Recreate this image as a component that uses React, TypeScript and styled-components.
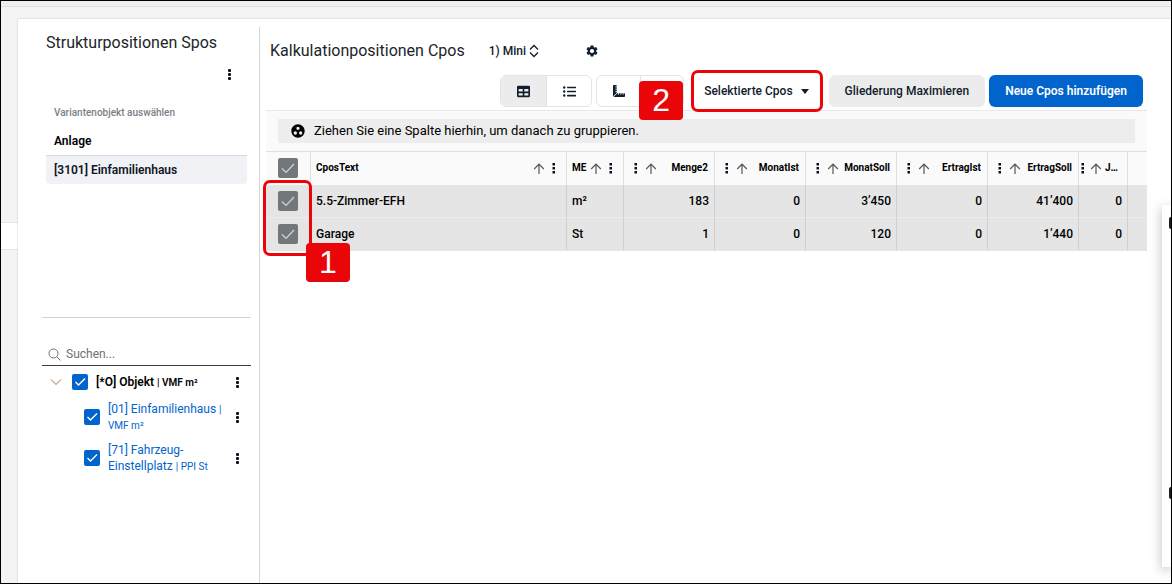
import React from "react";
import styled, { createGlobalStyle, css } from "styled-components";
import { FaTable, FaListUl, FaRulerCombined } from "react-icons/fa";
import { MdGroupWork, MdSettings } from "react-icons/md";

const GlobalStyle = createGlobalStyle`
  *, *::before, *::after { box-sizing: border-box; }
  body {
    margin: 0;
    font-family: Roboto, "Liberation Sans", sans-serif;
    font-size: 12px;
    line-height: 16px;
    color: #000;
    background: #f4f4f4;
  }
  button, input, select { font: inherit; color: inherit; }
  svg { display: block; flex: none; }
`;

const Window = styled.div`
  position: relative;
  display: flex;
  flex-direction: column;
  min-height: 100vh;
  overflow: hidden;
  border: 1px solid #000;
`;

const TopStrip = styled.div`
  height: 6px;
  background: #f0eff0;
  border-bottom: 1px solid #e2e1e2;
`;

const Body = styled.div`
  flex: 1;
  display: flex;
  padding-top: 12px;
`;

const Rail = styled.div`
  flex: none;
  width: 17px;
  padding-top: 203px;
`;

const RailTab = styled.div`
  height: 28px;
  background: #fff;
  border: solid #e6e6e6;
  border-width: 1px 0;
`;

const Card = styled.div`
  flex: 1;
  min-width: 0;
  display: flex;
  padding-top: 8px;
  background: #fff;
  box-shadow: 0 0 2px rgba(0, 0, 0, 0.2);
`;

const Sidebar = styled.aside`
  flex: none;
  width: 242px;
  padding: 4px 8px 0 24px;
  border-right: 1px solid #d6d6d6;
`;

const Title = styled.h2`
  margin: 0;
  font-size: 16px;
  line-height: 24px;
  font-weight: 400;
  color: #212529;
  white-space: nowrap;
`;

const SidebarHead = styled.div`
  padding: 0 4px;
`;

const MenuLine = styled.div`
  display: flex;
  justify-content: flex-end;
  padding: 12px 14px 0 0;
`;

const IconButton = styled.button`
  display: inline-flex;
  align-items: center;
  justify-content: center;
  padding: 0;
  border: 0;
  background: none;
  cursor: pointer;
`;

const Variants = styled.section`
  height: 237px;
  padding: 24px 4px 0;
  border-bottom: 1px solid #d4d4d4;
`;

const VariantLabel = styled.div`
  padding: 0 8px;
  font-size: 10px;
  font-weight: 500;
  color: #7b7f84;
`;

const VariantItem = styled.div<{ $selected?: boolean }>`
  padding: 6px 8px;
  font-weight: 600;
  ${(p) =>
    p.$selected
      ? css`
          background: #f1f2f5;
          border-radius: 0 0 4px 4px;
          color: #0d1526;
        `
      : css`
          margin-top: 6px;
          border-bottom: 1px solid #d5dade;
        `}
`;

const Search = styled.label`
  display: flex;
  align-items: center;
  gap: 5px;
  margin-top: 25px;
  padding: 3px 6px;
  border-bottom: 1px solid #3d3d3d;
`;

const SearchInput = styled.input`
  flex: 1;
  min-width: 0;
  height: 16px;
  padding: 0;
  border: 0;
  outline: 0;
  background: none;
  &::placeholder {
    color: #6f6f6f;
    opacity: 1;
  }
`;

const Tree = styled.ul`
  margin: 0;
  padding: 2px 10px 0 8px;
  list-style: none;
`;

const TreeRow = styled.li<{ $child?: boolean }>`
  display: flex;
  align-items: center;
  min-height: ${(p) => (p.$child ? 41 : 28)}px;
  padding-left: ${(p) => (p.$child ? 34 : 0)}px;
`;

const Twisty = styled(IconButton)`
  width: 12px;
  margin-right: 10px;
`;

const TreeLabel = styled.label<{ $child?: boolean }>`
  flex: 1;
  display: flex;
  align-items: center;
  gap: 8px;
  font-weight: ${(p) => (p.$child ? 400 : 600)};
  color: ${(p) => (p.$child ? "#0064cc" : "#000")};
`;

const Unit = styled.small`
  font-size: 10px;
  line-height: 12px;
`;

const Check = styled.input<{ $gray?: boolean }>`
  appearance: none;
  flex: none;
  display: block;
  margin: 0;
  width: ${(p) => (p.$gray ? 20 : 16)}px;
  height: ${(p) => (p.$gray ? 20 : 16)}px;
  border-radius: 2px;
  background: ${(p) => (p.$gray ? "#73767b" : "#0064cc")};
`;

const CheckBox = styled.span`
  position: relative;
  flex: none;
  display: inline-block;
  vertical-align: top;
`;

const Tick = styled.svg`
  position: absolute;
  inset: 0;
  width: 100%;
  height: 100%;
  fill: none;
  pointer-events: none;
`;

const Main = styled.main`
  flex: 1;
  min-width: 0;
  padding: 12px 24px 0 6px;
`;

const MainHead = styled.div`
  display: flex;
  align-items: center;
  padding-left: 4px;
`;

const ViewPicker = styled.div`
  display: flex;
  align-items: center;
  margin: 0 46px 0 24px;
  color: #111c2c;
`;

const ViewSelect = styled.select`
  appearance: none;
  width: 40px;
  padding: 0;
  border: 0;
  background: none;
  font-weight: 500;
`;

const Toolbar = styled.div`
  display: flex;
  justify-content: flex-end;
  gap: 4px;
  padding: 12px 4px 3px 0;
`;

const Segments = styled.div`
  position: relative;
  display: flex;
  border: 1px solid #e4e4e4;
  border-radius: 6px;
`;

const Segment = styled.button<{ $on?: boolean; $narrow?: boolean }>`
  display: flex;
  align-items: center;
  justify-content: center;
  width: ${(p) => (p.$narrow ? 43 : 45)}px;
  padding: 0;
  border: 0;
  border-radius: ${(p) => (p.$on ? "5px 0 0 5px" : "0")};
  background: ${(p) => (p.$on ? "#ececec" : "none")};
  color: #111c2c;
  & + & {
    border-left: 1px solid #e4e4e4;
  }
`;

const Button = styled.button<{ $kind: "plain" | "gray" | "primary" }>`
  display: flex;
  align-items: center;
  gap: 8px;
  height: 32px;
  padding: 0 16px;
  border: 0;
  border-radius: 6px;
  font-weight: ${(p) => (p.$kind === "primary" ? 600 : 500)};
  white-space: nowrap;
  color: ${(p) => (p.$kind === "primary" ? "#fff" : "#111c2c")};
  background: ${(p) =>
    ({ plain: "#fff", gray: "#ececec", primary: "#0064cc" })[p.$kind]};
`;

const Anchor = styled.div`
  position: relative;
`;

const markBox = css`
  position: absolute;
  border: 3px solid #e90508;
  border-radius: 7px;
  pointer-events: none;
`;

const SelectionMark = styled.span`
  ${markBox}
  inset: -5px 2px -5px 3px;
`;

const RowsMark = styled.span`
  ${markBox}
  left: -3px;
  bottom: -5px;
  width: 49px;
  height: 76px;
`;

const Badge = styled.span<{ $at: "toolbar" | "rows" }>`
  position: absolute;
  z-index: 1;
  width: 44px;
  height: 39px;
  border-radius: 4px;
  background: #e90508;
  color: #fff;
  font-family: "Liberation Sans", Arial, sans-serif;
  font-size: 32px;
  line-height: 38px;
  text-align: center;
  ${(p) =>
    p.$at === "toolbar"
      ? css`
          right: 0;
          top: 5px;
        `
      : css`
          left: 40px;
          bottom: -31px;
        `}
`;

const GroupPanel = styled.div`
  padding: 8px 12px;
  border-top: 1px solid #e8e8e8;
  background: #fafafa;
`;

const GroupHint = styled.div`
  display: flex;
  align-items: center;
  gap: 8px;
  height: 24px;
  padding: 0 12px;
  background: #ededed;
  font-size: 13px;
`;

const Grid = styled.table`
  width: 100%;
  table-layout: fixed;
  border-collapse: separate;
  border-spacing: 0;
  border-top: 1px solid #e0e0e0;
`;

const Col = styled.col<{ $w?: number }>`
  width: ${(p) => (p.$w ? `${p.$w}px` : "auto")};
`;

const Th = styled.th`
  height: 33px;
  padding: 0 0 2px;
  background: #fafafa;
  border-right: 1px solid #e0e0e0;
  font-size: 10px;
  font-weight: 700;
  &:last-child {
    border-right: 0;
  }
`;

const HeadCell = styled.div<{ $num?: boolean; $tight?: boolean }>`
  display: flex;
  align-items: center;
  gap: ${(p) => (p.$tight ? 3 : 5)}px;
  padding: ${(p) => (p.$tight ? "0 8px 0 0" : p.$num ? "0 6px 0 8px" : "0 8px 0 5px")};
  & > span {
    flex: 1;
    min-width: 0;
    overflow: ${(p) => (p.$num ? "hidden" : "visible")};
    text-overflow: ellipsis;
    white-space: nowrap;
    text-align: ${(p) => (p.$num ? "right" : "left")};
  }
`;

const Td = styled.td<{ $num?: boolean }>`
  height: 33px;
  padding: 0 5px;
  background: #e5e5e5;
  border-right: 1px solid #d0d0d0;
  border-bottom: 1px solid #ececec;
  font-weight: 500;
  text-align: ${(p) => (p.$num ? "right" : "left")};
  tr:last-child > & {
    border-bottom-color: #e5e5e5;
  }
  &:last-child {
    border-right: 0;
  }
`;

const CheckHolder = styled.div`
  display: flex;
  justify-content: center;
`;

const Drawer = styled.div`
  position: absolute;
  top: 204px;
  right: 0;
  bottom: 16px;
  width: 9px;
  display: flex;
  flex-direction: column;
  justify-content: space-between;
  align-items: flex-end;
  padding: 12px 0 68px;
  background: #fff;
  box-shadow: 0 3px 12px rgba(0, 0, 0, 0.28);
`;

const DrawerIcon = styled.i`
  width: 2px;
  height: 12px;
  border-radius: 2px 0 0 2px;
  background: #1c1c1c;
`;

const Kebab = () => (
  <svg width="8" height="14" viewBox="0 0 8 14" fill="#0b1020">
    <rect x="3" y="2" width="3" height="3" rx="1" />
    <rect x="3" y="6" width="3" height="3" rx="1" />
    <rect x="3" y="10" width="3" height="3" rx="1" />
  </svg>
);

const ColumnDots = () => (
  <svg width="8" height="14" viewBox="0 0 8 14" fill="#0b1020">
    <rect x="2.5" y="2" width="2.5" height="2.5" />
    <rect x="2.5" y="6" width="2.5" height="2.5" />
    <rect x="2.5" y="10" width="2.5" height="2.5" />
  </svg>
);

const ArrowUp = () => (
  <svg width="12" height="14" viewBox="0 0 12 14" fill="none" stroke="#555" strokeWidth="1.2">
    <path d="M6 13V3.5M1.2 8 6 3.2 10.8 8" />
  </svg>
);

const Checkbox = ({ label, gray }: { label?: string; gray?: boolean }) => (
  <CheckBox>
    <Check type="checkbox" defaultChecked aria-label={label} $gray={gray} />
    {gray ? (
      <Tick viewBox="0 0 20 20" stroke="#d4d5d6" strokeWidth="1.2">
        <path d="M4 10.5 8 14.5 16 6" />
      </Tick>
    ) : (
      <Tick viewBox="0 0 16 16" stroke="#fff" strokeWidth="1.4">
        <path d="M3.5 8 6.5 11 13 4.5" />
      </Tick>
    )}
  </CheckBox>
);

const numberColumns = ["Menge2", "MonatIst", "MonatSoll", "ErtragIst", "ErtragSoll", "J..."];

const rows = [
  { text: "5.5-Zimmer-EFH", unit: "m²", values: ["183", "0", "3’450", "0", "41’400", "0"] },
  { text: "Garage", unit: "St", values: ["1", "0", "120", "0", "1’440", "0"] },
];

const nodes = [
  { name: "[*O] Objekt", unit: "VMF m²", child: false },
  { name: "[01] Einfamilienhaus", unit: "VMF m²", child: true },
  { name: "[71] Fahrzeug-Einstellplatz", unit: "PPI St", child: true },
];

export default function App() {
  return (
    <>
      <GlobalStyle />
      <Window>
        <TopStrip />
        <Body>
          <Rail>
            <RailTab />
          </Rail>
          <Card>
            <Sidebar>
              <SidebarHead>
                <Title>Strukturpositionen Spos</Title>
                <MenuLine>
                  <IconButton aria-label="Menü">
                    <Kebab />
                  </IconButton>
                </MenuLine>
              </SidebarHead>
              <Variants>
                <VariantLabel>Variantenobjekt auswählen</VariantLabel>
                <VariantItem>Anlage</VariantItem>
                <VariantItem $selected>[3101] Einfamilienhaus</VariantItem>
              </Variants>
              <Search>
                <svg width="13" height="13" viewBox="0 0 13 13" fill="none" stroke="#6f6f6f">
                  <circle cx="5.5" cy="5.5" r="4.5" />
                  <path d="M9 9 12.5 12.5" />
                </svg>
                <SearchInput type="text" placeholder="Suchen..." aria-label="Suchen" />
              </Search>
              <Tree>
                {nodes.map((n) => (
                  <TreeRow key={n.name} $child={n.child}>
                    {!n.child && (
                      <Twisty aria-label="Zuklappen">
                        <svg width="12" height="8" viewBox="0 0 12 8" fill="none" stroke="#96703f">
                          <path d="M1 1.5 6 6.5 11 1.5" />
                        </svg>
                      </Twisty>
                    )}
                    <TreeLabel $child={n.child}>
                      <Checkbox />
                      <span>
                        {n.name} <Unit>{`| ${n.unit}`}</Unit>
                      </span>
                    </TreeLabel>
                    <IconButton aria-label="Menü">
                      <Kebab />
                    </IconButton>
                  </TreeRow>
                ))}
              </Tree>
            </Sidebar>
            <Main>
              <MainHead>
                <Title>Kalkulationpositionen Cpos</Title>
                <ViewPicker>
                  <ViewSelect aria-label="Ansicht">
                    <option>1) Mini</option>
                  </ViewSelect>
                  <svg width="10" height="14" viewBox="0 0 10 14" fill="none" stroke="#111c2c" strokeWidth="1.3">
                    <path d="M1 5.5 5 1.5 9 5.5M1 8.5 5 12.5 9 8.5" />
                  </svg>
                </ViewPicker>
                <IconButton aria-label="Einstellungen">
                  <MdSettings size={14} color="#111c2c" />
                </IconButton>
              </MainHead>
              <Toolbar>
                <Segments>
                  <Segment $on aria-label="Tabelle">
                    <FaTable size={13} />
                  </Segment>
                  <Segment aria-label="Liste">
                    <FaListUl size={13} />
                  </Segment>
                </Segments>
                <Segments>
                  <Segment $narrow aria-label="Masse">
                    <FaRulerCombined size={12} />
                  </Segment>
                  <Segment $narrow aria-label="Weitere" />
                  <Badge $at="toolbar">2</Badge>
                </Segments>
                <Anchor>
                  <Button $kind="plain" aria-haspopup="menu">
                    Selektierte Cpos
                    <svg width="8" height="5" viewBox="0 0 8 5" fill="#111c2c">
                      <path d="M0 0H8L4 5Z" />
                    </svg>
                  </Button>
                  <SelectionMark />
                </Anchor>
                <Button $kind="gray">Gliederung Maximieren</Button>
                <Button $kind="primary">Neue Cpos hinzufügen</Button>
              </Toolbar>
              <GroupPanel>
                <GroupHint>
                  <MdGroupWork size={16} />
                  Ziehen Sie eine Spalte hierhin, um danach zu gruppieren.
                </GroupHint>
              </GroupPanel>
              <Anchor>
                <Grid>
                  <colgroup>
                    <Col $w={45} />
                    <Col />
                    <Col $w={57} />
                    {numberColumns.map((c) => (
                      <Col key={c} $w={c === "J..." ? 49 : 91} />
                    ))}
                    <Col $w={19} />
                  </colgroup>
                  <thead>
                    <tr>
                      <Th>
                        <CheckHolder>
                          <Checkbox gray label="Alle auswählen" />
                        </CheckHolder>
                      </Th>
                      {["CposText", "ME"].map((c) => (
                        <Th key={c}>
                          <HeadCell>
                            <span>{c}</span>
                            <ArrowUp />
                            <ColumnDots />
                          </HeadCell>
                        </Th>
                      ))}
                      {numberColumns.map((c) => (
                        <Th key={c}>
                          <HeadCell $num $tight={c === "J..."}>
                            <ColumnDots />
                            <ArrowUp />
                            <span>{c}</span>
                          </HeadCell>
                        </Th>
                      ))}
                      <Th />
                    </tr>
                  </thead>
                  <tbody>
                    {rows.map((r) => (
                      <tr key={r.text}>
                        <Td>
                          <CheckHolder>
                            <Checkbox gray label={r.text} />
                          </CheckHolder>
                        </Td>
                        <Td>{r.text}</Td>
                        <Td>{r.unit}</Td>
                        {r.values.map((v, i) => (
                          <Td key={i} $num>
                            {v}
                          </Td>
                        ))}
                        <Td />
                      </tr>
                    ))}
                  </tbody>
                </Grid>
                <RowsMark />
                <Badge $at="rows">1</Badge>
              </Anchor>
            </Main>
          </Card>
        </Body>
        <Drawer>
          <DrawerIcon />
          <DrawerIcon />
        </Drawer>
      </Window>
    </>
  );
}
